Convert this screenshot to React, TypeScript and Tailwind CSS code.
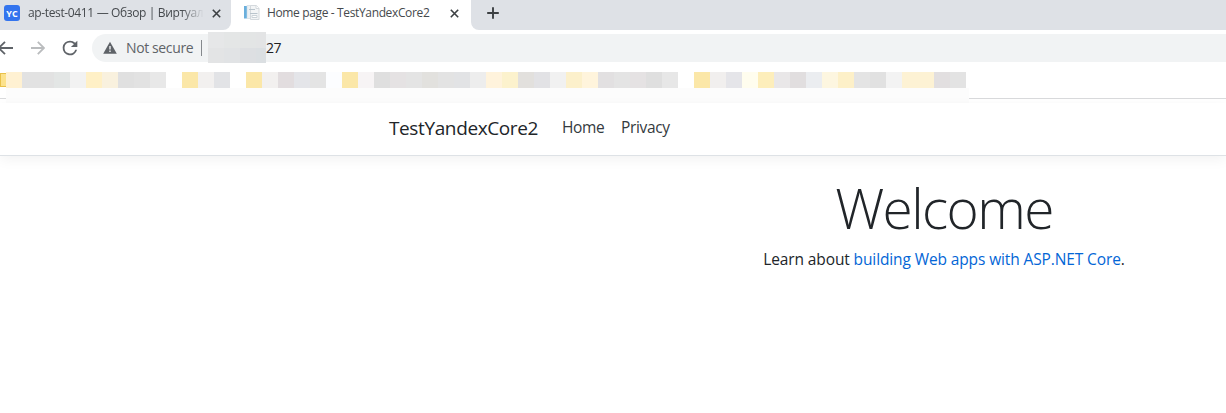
import React from "react";

const bookmarkBlocks = [
  "#fff1d2", "#e2e2e2", "#e2e2e2", "#e3e6e5", "#f2f2f2", "#fff0c6", "#f9f1de", "#e0e0e0", "#e2e2e2", "#e8e8e8",
  "#ffffff", "#fbe7a8", "#f2f0ef", "#e2e3e6", "#ffffff", "#fbe7a8", "#f2f0ef", "#e2dddf", "#e4e5e9", "#e4e4e4",
  "#fcfdff", "#fbe7a8", "#f7f4f5", "#dfdfdf", "#e5e2e3", "#e4e4e4", "#e2e1de", "#e3e3e3", "#e2e3e5", "#ededed",
  "#fff3dc", "#fcf2cd", "#e2e0dd", "#e2e2e5", "#f1f1f1", "#fcf0cb", "#fff4dc", "#e2e0e1", "#e4e4e4", "#e5e2e3",
  "#dfdfdf", "#e7e7e7", "#ffffff", "#fbe7a8", "#f1efee", "#e5e5e9", "#fffdee", "#fdeebb", "#e9e7e8", "#e1dedf",
  "#ebedf0", "#fdf6e0", "#fdf0c8", "#e4e4e4", "#e1e1e1", "#f3f3f3", "#fdf2d4", "#fdf2d4", "#e2dfe0", "#e3e3e3",
];

const hostBlocks = ["#e6e7e8", "#e4e6e6", "#e3e5e5", "#e3e4e5", "#e3e4e5", "#e1e3e5", "#dddfe2", "#dbdfe2"];

function CloseIcon() {
  return (
    <svg width="9" height="9" viewBox="0 0 9 9" className="shrink-0" stroke="#3c4043" strokeWidth="1.6">
      <path d="M.8.8l7.4 7.4M8.2.8L.8 8.2" />
    </svg>
  );
}

function PageIcon() {
  return (
    <svg width="16" height="17" viewBox="0 0 16 17" className="shrink-0">
      <path d="M3 1.5h6.5v13H3z" fill="#edf1f4" stroke="#dce3e8" />
      <path d="M0 2h2.8v12.5H0z" fill="#6aafdc" />
      <path d="M6.5 1.5h6l2.5 3v11H6.5z" fill="#f3f5f6" stroke="#d4d9dd" />
      <path d="M5 5.5h6M6 9.5h7.5" stroke="#b9c4cc" />
      <path d="M8 11.5h5v2H8z" fill="#fff" stroke="#cbd3d8" />
      <path d="M12 1.5v3h3" fill="#fff" stroke="#d4d9dd" />
    </svg>
  );
}

function TabStrip() {
  return (
    <div className="flex h-[30px] bg-white">
      <div className="flex w-[231px] items-start rounded-br-lg bg-[#dee1e6] pl-1">
        <div className="mt-[5px] flex h-4 w-4 items-center justify-center rounded-[3px] bg-[#3374ee] text-[9px] font-bold leading-none text-white">
          YC
        </div>
        <div className="ml-2 mt-[4px] w-[176px] whitespace-nowrap text-[12px] leading-[18px] tracking-[-0.36px] text-[#45494d] [mask-image:linear-gradient(to_right,black_87%,transparent)]">
          ap-test-0411 — Обзор | Виртуал
        </div>
        <div className="ml-2 mt-[9px]"><CloseIcon /></div>
      </div>
      <div className="flex w-[240px] items-start pl-[13px]">
        <div className="mt-[4px]"><PageIcon /></div>
        <div className="ml-[7px] mt-[4px] w-[175px] whitespace-nowrap text-[12px] leading-[18px] tracking-[-0.36px] text-[#45494d]">
          Home page - TestYandexCore2
        </div>
        <div className="ml-[8px] mt-[9px]"><CloseIcon /></div>
      </div>
      <div className="flex-1 rounded-bl-lg bg-[#dee1e6] pl-4 pt-[7px]">
        <svg width="12" height="12" viewBox="0 0 12 12" stroke="#3c4043" strokeWidth="1.9">
          <path d="M6 .2v11.6M.2 6h11.6" />
        </svg>
      </div>
    </div>
  );
}

function Toolbar() {
  return (
    <div className="flex h-[42px] items-start bg-white">
      <div className="mt-[11px] flex w-[92px]">
        <svg width="14" height="14" viewBox="0 0 14 14" fill="none" stroke="#5f6368" strokeWidth="1.8">
          <path d="M13 7H0M5 .8L-1.2 7 5 13.2" />
        </svg>
        <svg width="14" height="14" viewBox="0 0 14 14" fill="none" stroke="#babcbe" strokeWidth="1.8" className="ml-[17px]">
          <path d="M0 7h12.6M6.8.8L13 7l-6.2 6.2" />
        </svg>
        <svg width="22" height="22" viewBox="0 0 24 24" fill="#5f6368" className="-mt-[4px] ml-[14px]">
          <path d="M17.65 6.35A7.96 7.96 0 0 0 12 4a8 8 0 1 0 7.73 10h-2.08A6 6 0 1 1 12 6c1.66 0 3.14.69 4.22 1.78L13 11h7V4z" />
        </svg>
      </div>
      <div className="mt-1 flex h-7 flex-1 items-center rounded-l-full bg-[#f1f3f4] pl-[11px]">
        <svg width="14" height="14" viewBox="0 0 14 14">
          <path d="M7 .7l6.8 12.1H.2z" fill="#5f6368" />
          <path d="M6.3 5h1.4v3.4H6.3zM6.3 9.5h1.4v1.4H6.3z" fill="#f1f3f4" />
        </svg>
        <div className="-mt-px ml-[9px] w-[75px] whitespace-nowrap text-[14px] tracking-[-0.38px] text-[#5f6368]">Not secure</div>
        <div className="h-4 w-px bg-[#85898d]" />
        <div className="ml-[6px] mt-[-1px] grid h-[31px] w-[58px] shrink-0 grid-cols-[16px_16px_16px_10px] grid-rows-[16px_15px]">
          {hostBlocks.map((color, i) => (
            <div key={i} style={{ backgroundColor: color }} />
          ))}
        </div>
        <div className="-mt-px text-[14px] tracking-[-0.6px] text-[#202124]">27</div>
      </div>
    </div>
  );
}

function Bookmarks() {
  return (
    <div className="flex h-[31px] items-start">
      <div className="flex h-[27px] w-[6px] flex-col border-b border-[#d9dadc]">
        <div className="mt-[1px] h-[14px] border-y border-l border-[#e9c14a] bg-[#fce28c]" />
      </div>
      <div className="w-[963px] bg-[#fcfcfc]">
        <div className="flex h-4 bg-white">
          {bookmarkBlocks.map((color, i) => (
            <div key={i} className="w-4" style={{ backgroundColor: color }} />
          ))}
        </div>
        <div className="h-[15px]" />
      </div>
      <div className="h-[27px] flex-1 border-b border-[#d9dadc]" />
    </div>
  );
}

export default function App() {
  return (
    <div className="flex h-[413px] flex-col overflow-hidden bg-white font-['Open_Sans','Noto_Sans',sans-serif]">
      <TabStrip />
      <Toolbar />
      <Bookmarks />
      <nav className="flex h-[53px] shrink-0 items-center border-b border-[#dee2e6] pb-[2px] pl-[389px] shadow-[0_4px_12px_rgba(0,0,0,0.05)]">
        <a className="w-[173px] whitespace-nowrap text-[19px] tracking-[-0.38px] text-[#212529]">TestYandexCore2</a>
        <a className="w-[59px] text-[15.5px] tracking-[-0.35px] text-[#343a40]">Home</a>
        <a className="text-[15.5px] tracking-[-0.35px] text-[#343a40]">Privacy</a>
      </nav>
      <main className="w-[1110px] flex-1 self-start pl-[389px]">
        <div className="w-[1110px] pt-4 text-center">
          <h1 className="mt-[2px] text-[55px] font-light leading-[67px] tracking-[-1.6px] text-[#212529]">Welcome</h1>
          <p className="mt-[6px] text-[15.5px] leading-6 tracking-[-0.12px] text-[#212529]">
            Learn about <a className="text-[#0366d6]">building Web apps with ASP.NET Core</a>.
          </p>
        </div>
      </main>
    </div>
  );
}
